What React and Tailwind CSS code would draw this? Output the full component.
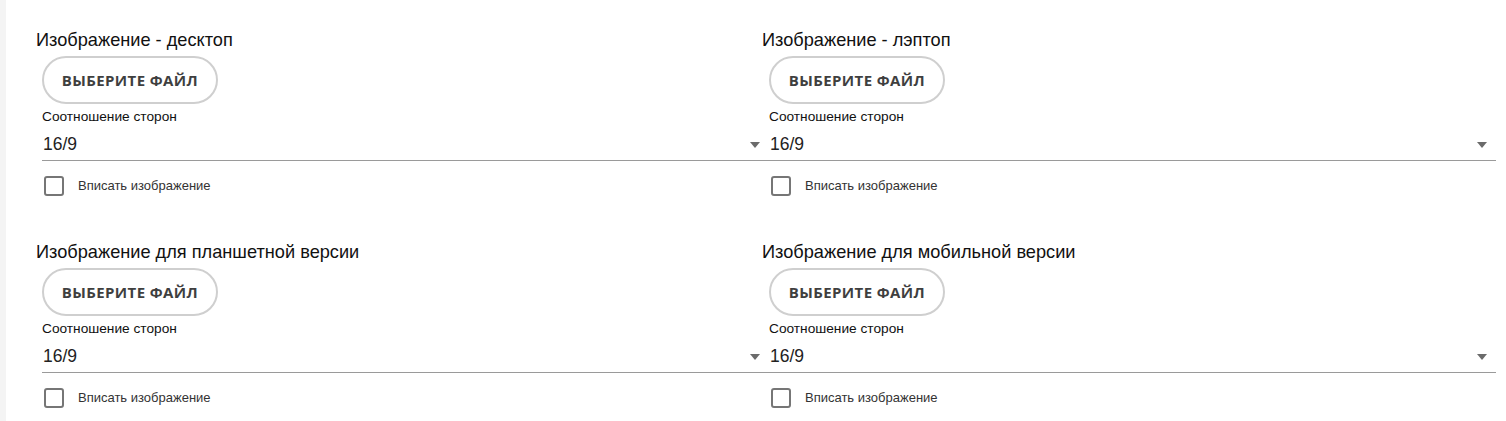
import React from "react";

function Field({ title, shift }) {
  return (
    <div className="flex flex-col">
      <div className="h-[20px] text-[18.2px] leading-[20px] text-[#111]">{title}</div>
      <div className={shift}>
        <button className="mt-[6px] flex h-[48px] w-[176px] items-center justify-center rounded-full border-2 border-[#cfcfcf] bg-white pt-[1px] text-[15px] font-bold tracking-[0.4px] text-[#3f3f3f] [font-family:'Open_Sans',sans-serif]">
          ВЫБЕРИТЕ ФАЙЛ
        </button>
        <div className="mt-[4px] h-[17px] pt-[1px] text-[13.7px] leading-[16px] text-[#111]">Соотношение сторон</div>
        <div className="relative flex h-[36px] w-[727px] border-b border-[#9a9a9a] pl-[1px] pt-[10px]">
          <span className="text-[17.5px] leading-[18px] text-[#222]">16/9</span>
          <svg className="absolute right-[8px] top-[17px]" width="12" height="6" viewBox="0 0 12 6">
            <path d="M1 0 L11 0 L6 6 Z" fill="#6b6b6b" />
          </svg>
        </div>
        <label className="mt-[15px] flex h-[20px] items-center">
          <span className="ml-[2px] h-[20px] w-[20px] rounded-[3px] border-2 border-[#767676] bg-white" />
          <span className="ml-[14px] text-[13px] text-[#333]">Вписать изображение</span>
        </label>
      </div>
    </div>
  );
}

export default function App() {
  return (
    <div className="flex min-h-[421px] w-[1506px] bg-white [font-family:'Liberation_Sans',Arial,sans-serif]">
      <div className="w-[6px] shrink-0 bg-[#f4f4f4]" />
      <div className="flex flex-col pl-[30px] pt-[30px]">
        <div className="grid grid-cols-[726px_734px]">
          <Field title="Изображение - десктоп" shift="ml-[6px]" />
          <Field title="Изображение - лэптоп" shift="ml-[7px]" />
        </div>
        <div className="mt-[46px] grid grid-cols-[726px_734px]">
          <Field title="Изображение для планшетной версии" shift="ml-[6px]" />
          <Field title="Изображение для мобильной версии" shift="ml-[7px]" />
        </div>
      </div>
    </div>
  );
}
